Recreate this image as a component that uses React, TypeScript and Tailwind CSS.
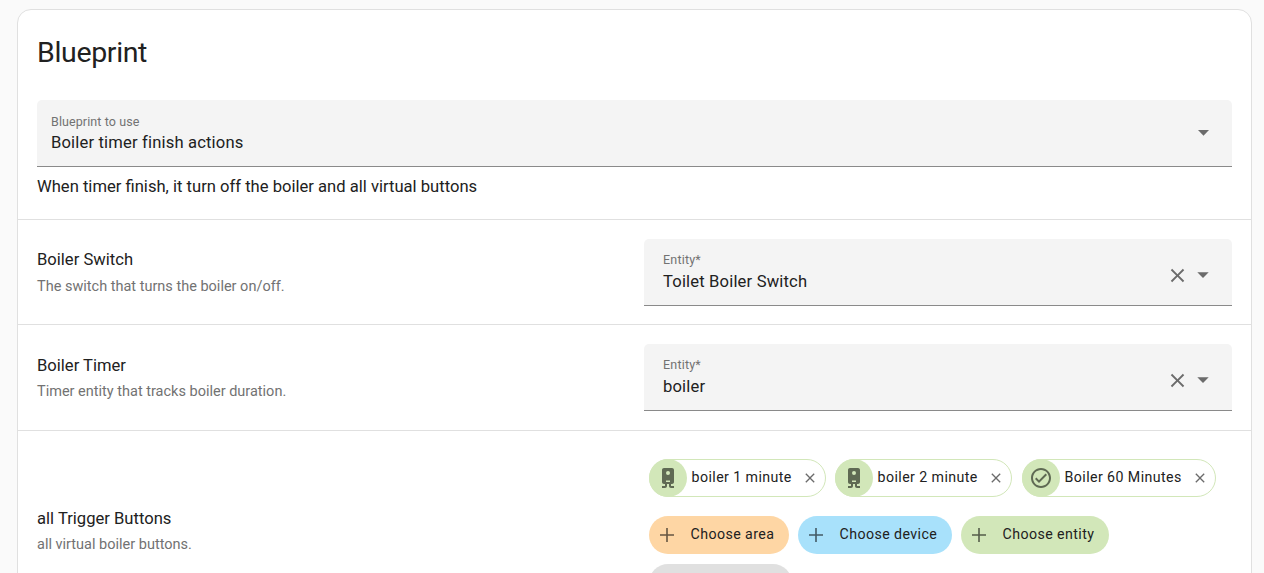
import type { ReactNode } from "react";

const BOILER =
  "M8,2C6.89,2 6,2.89 6,4V16C6,17.11 6.89,18 8,18H9V20H6V22H9C10.11,22 11,21.11 11,20V18H13V20C13,21.11 13.89,22 15,22H18V20H15V18H16C17.11,18 18,17.11 18,16V4C18,2.89 17.11,2 16,2H8M12,4.97A2,2 0 0,1 14,6.97A2,2 0 0,1 12,8.97A2,2 0 0,1 10,6.97A2,2 0 0,1 12,4.97M10,14.5H14V16H10V14.5Z";
const CHECK =
  "M12 2C6.5 2 2 6.5 2 12S6.5 22 12 22 22 17.5 22 12 17.5 2 12 2M12 20C7.59 20 4 16.41 4 12S7.59 4 12 4 20 7.59 20 12 16.41 20 12 20M16.59 7.58L10 14.17L7.41 11.59L6 13L10 17L18 9L16.59 7.58Z";
const CLOSE =
  "M19,6.41L17.59,5L12,10.59L6.41,5L5,6.41L10.59,12L5,17.59L6.41,19L12,13.41L17.59,19L19,17.59L13.41,12L19,6.41Z";
const PLUS = "M19,12.8H12.8V19H11.2V12.8H5V11.2H11.2V5H12.8V11.2H19V12.8Z";

function Icon({ d, className }: { d: string; className: string }) {
  return (
    <svg viewBox="0 0 24 24" className={`shrink-0 ${className}`} fill="currentColor">
      <path d={d} />
    </svg>
  );
}

function Caret({ d, className }: { d: string; className: string }) {
  return (
    <svg viewBox="0 0 12 6" className={`h-[6px] w-[12px] shrink-0 ${className}`} fill="currentColor">
      <path d={d} />
    </svg>
  );
}

type FieldProps = { label: string; value: string; clearable?: boolean; pad: string; labelClass: string };

function Field({ label, value, clearable, pad, labelClass }: FieldProps) {
  return (
    <div className={`flex h-[67px] items-center rounded-t-[5px] border-b border-[#8a8a8a] bg-[#f4f4f4] pr-[23px] ${pad}`}>
      <div className="flex grow flex-col pt-px">
        <span className={`text-[12.5px] text-[#727272] ${labelClass}`}>{label}</span>
        <span className="text-[16.6px] leading-[24px] tracking-[0.16px] text-[#212121]">{value}</span>
      </div>
      <div className="flex items-center gap-[8px] text-[#6b6b6b]">
        {clearable && <Icon d={CLOSE} className="mt-[7px] size-[23px]" />}
        {clearable ? (
          <Caret d="M0.3 0.3H11.7L6 6Z" className="mt-[6px]" />
        ) : (
          <Caret d="M1 0H12L6.5 5.7Z" className="" />
        )}
      </div>
    </div>
  );
}

type RowProps = { title: string; text: string; className: string; labels: string; children: ReactNode };

function Row({ title, text, className, labels, children }: RowProps) {
  return (
    <div className={`flex border-t border-[#e0e0e0] px-[19px] pt-[19px] ${className}`}>
      <div className={`flex w-[607px] shrink-0 flex-col justify-center ${labels}`}>
        <span className="text-[16.6px] text-[#212121]">{title}</span>
        <span className="text-[14.5px] text-[#727272]">{text}</span>
      </div>
      <div className="min-w-0 grow">{children}</div>
    </div>
  );
}

function EntityChip({ icon, label, width }: { icon: string; label: string; width: string }) {
  return (
    <div className={`flex h-[38px] items-center rounded-full border border-[#d2e7b9] bg-white text-[#212121] ${width}`}>
      <div className="-ml-px flex size-[38px] shrink-0 items-center justify-center rounded-full bg-[#d2e7b9] text-[#5f6a53]">
        <Icon d={icon} className="size-[24px]" />
      </div>
      <span className="ml-[4.5px] grow whitespace-nowrap text-[14.2px] tracking-[0.42px]">{label}</span>
      <Icon d={CLOSE} className="mr-[7px] size-[16px] text-[#6b6b6b]" />
    </div>
  );
}

function AddChip({ label, color }: { label: string; color: string }) {
  return (
    <div className={`flex h-[38px] items-center rounded-full pl-[6px] text-[#212121] ${color}`}>
      <Icon d={PLUS} className="size-[24px] text-black/60" />
      <span className="ml-[11.5px] whitespace-nowrap text-[14.2px] tracking-[0.42px]">{label}</span>
    </div>
  );
}

export default function App() {
  return (
    <div className="h-[573px] overflow-hidden bg-[#fafafa] pt-[9px] pr-[12px] pl-[17px] font-[Roboto,sans-serif]">
      <div className="h-[700px] rounded-[14px] border border-[#e0e0e0] bg-white">
        <div className="h-[209px] px-[19px] pt-[24px]">
          <h1 className="h-[66px] text-[28.5px] leading-[38px] tracking-[-0.34px] text-[#212121]">Blueprint</h1>
          <Field label="Blueprint to use" value="Boiler timer finish actions" pad="pl-[14px]" labelClass="leading-[18px] tracking-[0.1px]" />
          <p className="pt-[8px] text-[16.6px] leading-[24px] text-[#212121]">
            When timer finish, it turn off the boiler and all virtual buttons
          </p>
        </div>
        <Row title="Boiler Switch" text="The switch that turns the boiler on/off." className="h-[105px] pb-[18px]" labels="gap-px pt-px leading-[26px]">
          <Field label="Entity*" value="Toilet Boiler Switch" clearable pad="pl-[19px]" labelClass="-mt-px mb-px leading-[18px] tracking-[0.2px]" />
        </Row>
        <Row title="Boiler Timer" text="Timer entity that tracks boiler duration." className="h-[106px] pb-[19px]" labels="pt-[3px] leading-[26px]">
          <Field label="Entity*" value="boiler" clearable pad="pl-[19px]" labelClass="-mt-px mb-px leading-[18px] tracking-[0.2px]" />
        </Row>
        <Row title="all Trigger Buttons" text="all virtual boiler buttons." className="h-[203px] pb-[20px]" labels="leading-[26px]">
          <div className="flex flex-col pt-[9px] pl-[5px]">
            <div className="flex">
              <EntityChip icon={BOILER} label="boiler 1 minute" width="w-[177px] mr-[9px]" />
              <EntityChip icon={BOILER} label="boiler 2 minute" width="w-[177px] mr-[10px]" />
              <EntityChip icon={CHECK} label="Boiler 60 Minutes" width="w-[194px]" />
            </div>
            <div className="mt-[19px] flex gap-[9px]">
              <AddChip label="Choose area" color="w-[140px] bg-[#fed6a4]" />
              <AddChip label="Choose device" color="w-[154px] bg-[#a8e1fb]" />
              <AddChip label="Choose entity" color="w-[148px] bg-[#d2e7b9]" />
            </div>
            <div className="mt-[10px] h-[38px] w-[143px] rounded-full bg-[#e0e0e0]" />
          </div>
        </Row>
      </div>
    </div>
  );
}
